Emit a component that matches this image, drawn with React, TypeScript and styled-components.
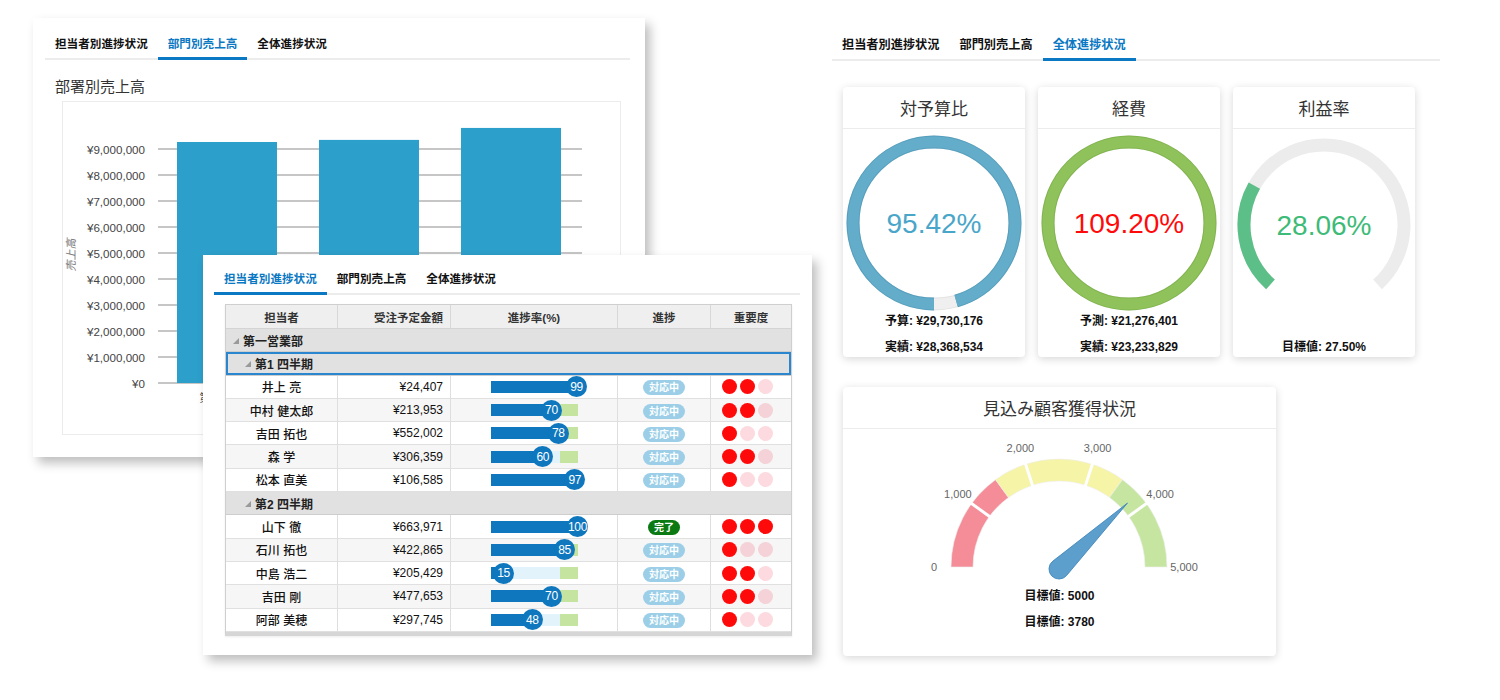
import React from 'react';
import styled, { createGlobalStyle } from 'styled-components';

const GlobalStyle = createGlobalStyle`
  * { box-sizing: border-box; }
  html, body { margin: 0; padding: 0; background: #fff; }
  body {
    font-family: "Liberation Sans", "Noto Sans CJK JP", sans-serif;
    color: #222;
  }
`;

const JP = `"Liberation Sans", "Noto Sans CJK JP", sans-serif`;
const BLUE = '#0a78c2';

const Page = styled.div`
  display: flex;
  width: 1500px;
  height: 700px;
  overflow: hidden;
`;

// left side: two overlapping windows
const Stage = styled.div`
  position: relative;
  flex: none;
  width: 832px;
  height: 700px;
  padding: 18px 0 0 33px;
`;

const Window = styled.div`
  background: #fff;
  box-shadow: 5px 6px 10px rgba(0, 0, 0, 0.26);
`;

const BackPanel = styled(Window)`
  width: 612px;
  height: 439px;
  padding: 10px 15px 0 12px;
`;

const FrontPanel = styled(Window)`
  position: absolute;
  left: 203px;
  top: 255px;
  width: 609px;
  height: 400px;
  padding: 8px 12px 0 11px;
`;

const TabBar = styled.div<{ $size: number }>`
  display: flex;
  border-bottom: 2px solid #ececec;
  font-size: ${(p) => p.$size}px;
`;

const Tab = styled.div<{ $active?: boolean }>`
  padding: 7px 10px 6px;
  line-height: 16px;
  font-weight: 700;
  font-family: "Noto Sans CJK JP", sans-serif;
  color: ${(p) => (p.$active ? BLUE : '#111')};
  border-bottom: 3px solid ${(p) => (p.$active ? BLUE : 'transparent')};
  margin-bottom: -2px;
`;

const tabNames = ['担当者別進捗状況', '部門別売上高', '全体進捗状況'];

const Tabs: React.FC<{ active: number; size?: number }> = ({ active, size = 12.2 }) => (
  <TabBar $size={size}>
    {tabNames.map((t, i) => (
      <Tab key={t} $active={i === active}>
        {t}
      </Tab>
    ))}
  </TabBar>
);

const PanelTitle = styled.div`
  margin: 16px 0 0 10px;
  font-size: 15px;
  line-height: 20px;
  font-family: "Noto Sans CJK JP", sans-serif;
  color: #333;
`;

const ChartBox = styled.div`
  margin: 5px 0 0 17px;
  width: 559px;
  height: 334px;
  border: 1px solid #ececec;
`;

const bars = [
  { x: 114, value: 9.27, label: '第一営業部' },
  { x: 256, value: 9.35, label: '第二営業部' },
  { x: 398, value: 9.81, label: '第三営業部' },
];
const yTicks = [9, 8, 7, 6, 5, 4, 3, 2, 1, 0];

const SalesChart = () => (
  <svg width={557} height={332}>
    {yTicks.map((v, i) => {
      const y = 47 + i * 26;
      return (
        <g key={v}>
          <line x1={95} x2={519} y1={y} y2={y} stroke="#c6c6c6" strokeWidth={2} />
          <text x={82} y={y} textAnchor="end" dominantBaseline="central" fontSize={11.6} fill="#444" fontFamily={JP}>
            {v === 0 ? '¥0' : `¥${v},000,000`}
          </text>
        </g>
      );
    })}
    {bars.map((b) => (
      <g key={b.label}>
        <rect x={b.x} y={281 - b.value * 26} width={100} height={b.value * 26} fill="#2c9fca" />
        <text x={b.x + 50} y={296} textAnchor="middle" dominantBaseline="central" fontSize={11} fill="#555" fontFamily={JP}>
          {b.label}
        </text>
      </g>
    ))}
    <text
      transform="translate(8 153) rotate(-90)"
      textAnchor="middle"
      dominantBaseline="central"
      fontSize={11}
      fontStyle="italic"
      fill="#777"
      fontFamily={JP}
    >
      売上高
    </text>
  </svg>
);

// table
const COLS = '112px 113px 167px 93px 80px';

const Table = styled.div`
  margin: 9px 0 0 11px;
  width: 567px;
  border: 1px solid #cfcfcf;
  border-bottom: 4px solid #d6d6d6;
  font-size: 12px;
  box-shadow: 0 1px 2px rgba(0, 0, 0, 0.08);
`;

const HeaderRow = styled.div`
  display: grid;
  grid-template-columns: ${COLS};
  height: 24px;
  background: #efefef;
  border-bottom: 1px solid #d4d4d4;
`;

const HeadCell = styled.div<{ $align?: string }>`
  display: flex;
  align-items: center;
  justify-content: ${(p) => p.$align || 'center'};
  padding: 0 7px;
  border-right: 1px solid #d8d8d8;
  font-weight: 700;
  font-size: 11.5px;
  color: #333;
  &:last-child { border-right: none; }
`;

const GroupRow = styled.div<{ $level: number; $selected?: boolean }>`
  display: flex;
  align-items: center;
  gap: 4px;
  height: 23.3px;
  padding-left: ${(p) => 7 + p.$level * 12}px;
  background: #e1e1e1;
  border-bottom: 1px solid #cdcdcd;
  font-weight: 700;
  color: #222;
  box-shadow: ${(p) => (p.$selected ? `inset 0 0 0 2px #2a86cf` : 'none')};
`;

const Caret = styled.span`
  width: 0;
  height: 0;
  border-left: 6px solid transparent;
  border-bottom: 6px solid #9a9a9a;
  margin-top: 2px;
`;

const DataRow = styled.div<{ $striped: boolean }>`
  display: grid;
  grid-template-columns: ${COLS};
  height: 23.3px;
  background: ${(p) => (p.$striped ? '#f6f6f6' : '#fff')};
  border-bottom: 1px solid #e0e0e0;
`;

const Cell = styled.div<{ $align?: string }>`
  display: flex;
  align-items: center;
  justify-content: ${(p) => p.$align || 'center'};
  padding: 0 7px;
  border-right: 1px solid #dedede;
  color: #111;
  &:last-child { border-right: none; }
`;

const Name = styled(Cell)`
  font-weight: 500;
`;

const Track = styled.div`
  position: relative;
  width: 87px;
  height: 12px;
  background: #e3f3fb;
`;

const GoalZone = styled.div`
  position: absolute;
  left: 80%;
  right: 0;
  top: 0;
  bottom: 0;
  background: #c4e4a0;
`;

const Fill = styled.div`
  position: absolute;
  left: 0;
  top: 0;
  bottom: 0;
  background: #0e77bd;
`;

const Knob = styled.div`
  position: absolute;
  top: 50%;
  width: 21px;
  height: 21px;
  margin: -10.5px 0 0 -10.5px;
  border-radius: 50%;
  background: #0e77bd;
  color: #fff;
  font-size: 12px;
  letter-spacing: -0.4px;
  display: flex;
  align-items: center;
  justify-content: center;
`;

const Pill = styled.span<{ $done?: boolean }>`
  display: inline-block;
  margin-top: 2px;
  padding: 0 6px;
  height: 15px;
  line-height: 15px;
  border-radius: 8px;
  background: ${(p) => (p.$done ? '#0b7a12' : '#9ccfe7')};
  color: #fff;
  font-size: 10px;
  font-weight: 700;
`;

const Dots = styled(Cell)`
  justify-content: flex-start;
  padding-left: 11px;
  gap: 3px;
`;

const Dot = styled.span<{ $on: boolean }>`
  width: 15px;
  height: 15px;
  border-radius: 50%;
  background: ${(p) => (p.$on ? '#ff0a0a' : 'rgba(240, 50, 80, 0.18)')};
`;

type Person = { name: string; amount: string; rate: number; level: number; done?: boolean };

const groups: { title: string; people: Person[] }[] = [
  {
    title: '第1 四半期',
    people: [
      { name: '井上 亮', amount: '¥24,407', rate: 99, level: 2 },
      { name: '中村 健太郎', amount: '¥213,953', rate: 70, level: 2 },
      { name: '吉田 拓也', amount: '¥552,002', rate: 78, level: 1 },
      { name: '森 学', amount: '¥306,359', rate: 60, level: 2 },
      { name: '松本 直美', amount: '¥106,585', rate: 97, level: 1 },
    ],
  },
  {
    title: '第2 四半期',
    people: [
      { name: '山下 徹', amount: '¥663,971', rate: 100, level: 3, done: true },
      { name: '石川 拓也', amount: '¥422,865', rate: 85, level: 1 },
      { name: '中島 浩二', amount: '¥205,429', rate: 15, level: 2 },
      { name: '吉田 剛', amount: '¥477,653', rate: 70, level: 2 },
      { name: '阿部 美穂', amount: '¥297,745', rate: 48, level: 1 },
    ],
  },
];

const ProgressTable = () => (
  <Table>
    <HeaderRow>
      <HeadCell>担当者</HeadCell>
      <HeadCell $align="flex-end">受注予定金額</HeadCell>
      <HeadCell>進捗率(%)</HeadCell>
      <HeadCell>進捗</HeadCell>
      <HeadCell>重要度</HeadCell>
    </HeaderRow>
    <GroupRow $level={0}>
      <Caret />
      第一営業部
    </GroupRow>
    {groups.map((g, gi) => (
      <React.Fragment key={g.title}>
        <GroupRow $level={1} $selected={gi === 0}>
          <Caret />
          {g.title}
        </GroupRow>
        {g.people.map((p, i) => (
          <DataRow key={p.name} $striped={i % 2 === 1}>
            <Name>{p.name}</Name>
            <Cell $align="flex-end">{p.amount}</Cell>
            <Cell>
              <Track>
                <GoalZone />
                <Fill style={{ width: `${p.rate}%` }} />
                <Knob style={{ left: `${p.rate}%` }}>{p.rate}</Knob>
              </Track>
            </Cell>
            <Cell>
              <Pill $done={p.done}>{p.done ? '完了' : '対応中'}</Pill>
            </Cell>
            <Dots>
              {[0, 1, 2].map((d) => (
                <Dot key={d} $on={d < p.level} />
              ))}
            </Dots>
          </DataRow>
        ))}
      </React.Fragment>
    ))}
  </Table>
);

// right side: dashboard
const Dashboard = styled.div`
  flex: none;
  width: 608px;
  padding-top: 29px;
`;

const CardArea = styled.div`
  display: flex;
  flex-direction: column;
  gap: 30px;
  padding: 26px 0 0 11px;
`;

const CardRow = styled.div`
  display: flex;
  gap: 13px;
`;

const Card = styled.div<{ $w: number; $h: number }>`
  display: flex;
  flex-direction: column;
  width: ${(p) => p.$w}px;
  height: ${(p) => p.$h}px;
  background: #fff;
  border-radius: 4px;
  box-shadow: 0 2px 9px rgba(0, 0, 0, 0.16);
`;

const CardTitle = styled.div`
  flex: none;
  height: 42px;
  display: flex;
  align-items: center;
  justify-content: center;
  border-bottom: 1px solid #ececec;
  font-size: 17px;
  font-family: "Noto Sans CJK JP", sans-serif;
  color: #333;
`;

const CardBody = styled.div<{ $pad?: number }>`
  flex: 1;
  display: flex;
  flex-direction: column;
  align-items: center;
  padding-bottom: ${(p) => p.$pad || 0}px;
`;

const Stats = styled.div`
  flex: 1;
  display: flex;
  flex-direction: column;
  justify-content: flex-end;
  align-items: center;
  gap: 6px;
`;

const Stat = styled.div`
  font-size: 12px;
  line-height: 20px;
  font-weight: 700;
  color: #111;
`;

const RING = { cx: 91, cy: 94, r: 81 };
const CIRC = 2 * Math.PI * RING.r;

const Ring: React.FC<{ ratio: number; color: string; edge: string; text: string; textColor: string }> = ({
  ratio,
  color,
  edge,
  text,
  textColor,
}) => {
  const len = Math.min(ratio, 1) * CIRC;
  const rot = `rotate(90 ${RING.cx} ${RING.cy})`;
  return (
    <svg width={182} height={182}>
      <circle cx={RING.cx} cy={RING.cy} r={RING.r} fill="none" stroke="#e2e2e2" strokeWidth={13} />
      <circle cx={RING.cx} cy={RING.cy} r={RING.r} fill="none" stroke="#efefef" strokeWidth={11} />
      <circle
        cx={RING.cx}
        cy={RING.cy}
        r={RING.r}
        fill="none"
        stroke={edge}
        strokeWidth={13}
        strokeDasharray={`${len} ${CIRC}`}
        transform={rot}
      />
      <circle
        cx={RING.cx}
        cy={RING.cy}
        r={RING.r}
        fill="none"
        stroke={color}
        strokeWidth={11}
        strokeDasharray={`${len} ${CIRC}`}
        transform={rot}
      />
      <text x={RING.cx} y={RING.cy} textAnchor="middle" dominantBaseline="central" fontSize={28} fill={textColor} fontFamily={JP}>
        {text}
      </text>
    </svg>
  );
};

const arcPt = (cx: number, cy: number, r: number, t: number) => {
  const a = (t * Math.PI) / 180;
  return [cx - r * Math.sin(a), cy + r * Math.cos(a)];
};

const arcPath = (cx: number, cy: number, r: number, t0: number, t1: number) => {
  const [x0, y0] = arcPt(cx, cy, r, t0);
  const [x1, y1] = arcPt(cx, cy, r, t1);
  return `M${x0} ${y0} A${r} ${r} 0 ${t1 - t0 > 180 ? 1 : 0} 1 ${x1} ${y1}`;
};

const ProfitArc: React.FC<{ ratio: number }> = ({ ratio }) => {
  const start = 42;
  const sweep = 276;
  return (
    <svg width={182} height={182}>
      <path d={arcPath(91, 96, 80, start, start + sweep)} fill="none" stroke="#ececec" strokeWidth={13} />
      <path d={arcPath(91, 96, 80, start, start + sweep * ratio)} fill="none" stroke="#5dbf88" strokeWidth={13} />
      <text x={91} y={96} textAnchor="middle" dominantBaseline="central" fontSize={28} fill="#3dbb77" fontFamily={JP}>
        28.06%
      </text>
    </svg>
  );
};

const G = { cx: 216, cy: 138, ro: 108, ri: 86, max: 5000 };

const gPt = (v: number, r: number) => {
  const a = (Math.PI * v) / G.max;
  return [G.cx - r * Math.cos(a), G.cy - r * Math.sin(a)];
};

const band = (a: number, b: number) => {
  const [x1, y1] = gPt(a, G.ro);
  const [x2, y2] = gPt(b, G.ro);
  const [x3, y3] = gPt(b, G.ri);
  const [x4, y4] = gPt(a, G.ri);
  return `M${x1} ${y1} A${G.ro} ${G.ro} 0 0 1 ${x2} ${y2} L${x3} ${y3} A${G.ri} ${G.ri} 0 0 0 ${x4} ${y4} Z`;
};

const bands = [
  { from: 0, to: 1500, color: '#f48d97' },
  { from: 1500, to: 3500, color: '#f6f4a6' },
  { from: 3500, to: 5000, color: '#c6e5a0' },
];

const LeadGauge: React.FC<{ value: number }> = ({ value }) => (
  <svg width={433} height={155}>
    {bands.map((b) => (
      <path key={b.from} d={band(b.from, b.to)} fill={b.color} stroke="#eee" strokeWidth={0.6} />
    ))}
    {[1000, 2000, 3000, 4000].map((v) => {
      const [x1, y1] = gPt(v, G.ri - 1);
      const [x2, y2] = gPt(v, G.ro + 1);
      return <line key={v} x1={x1} y1={y1} x2={x2} y2={y2} stroke="#fff" strokeWidth={3} />;
    })}
    {[0, 1000, 2000, 3000, 4000, 5000].map((v) => {
      const [x, y] = gPt(v, 125);
      return (
        <text key={v} x={x} y={y} textAnchor="middle" dominantBaseline="central" fontSize={11} fill="#666" fontFamily={JP}>
          {v.toLocaleString('en-US')}
        </text>
      );
    })}
    <g transform={`translate(${G.cx} ${G.cy + 2}) rotate(${(value / G.max) * 180 - 180})`}>
      <path d="M1.05 -9.94 L95 0 L1.05 9.94 A10 10 0 1 1 1.05 -9.94 Z" fill="#5c9fcd" stroke="#3f86ba" strokeWidth={0.8} />
    </g>
  </svg>
);

export default function App() {
  return (
    <>
      <GlobalStyle />
      <Page>
        <Stage>
          <BackPanel>
            <Tabs active={1} size={11.6} />
            <PanelTitle>部署別売上高</PanelTitle>
            <ChartBox>
              <SalesChart />
            </ChartBox>
          </BackPanel>
          <FrontPanel>
            <Tabs active={0} size={11.6} />
            <ProgressTable />
          </FrontPanel>
        </Stage>
        <Dashboard>
          <Tabs active={2} />
          <CardArea>
            <CardRow>
              <Card $w={182} $h={270}>
                <CardTitle>対予算比</CardTitle>
                <CardBody>
                  <Ring ratio={0.9542} color="#64adca" edge="#559fbe" text="95.42%" textColor="#4aa6c9" />
                  <Stats>
                    <Stat>予算: ¥29,730,176</Stat>
                    <Stat>実績: ¥28,368,534</Stat>
                  </Stats>
                </CardBody>
              </Card>
              <Card $w={182} $h={270}>
                <CardTitle>経費</CardTitle>
                <CardBody>
                  <Ring ratio={1.092} color="#90c25c" edge="#80b54c" text="109.20%" textColor="#ff0a0a" />
                  <Stats>
                    <Stat>予測: ¥21,276,401</Stat>
                    <Stat>実績: ¥23,233,829</Stat>
                  </Stats>
                </CardBody>
              </Card>
              <Card $w={182} $h={270}>
                <CardTitle>利益率</CardTitle>
                <CardBody>
                  <ProfitArc ratio={0.2806} />
                  <Stats>
                    <Stat>目標値: 27.50%</Stat>
                  </Stats>
                </CardBody>
              </Card>
            </CardRow>
            <Card $w={433} $h={269}>
              <CardTitle>見込み顧客獲得状況</CardTitle>
              <CardBody $pad={24}>
                <LeadGauge value={3780} />
                <Stats>
                  <Stat>目標値: 5000</Stat>
                  <Stat>目標値: 3780</Stat>
                </Stats>
              </CardBody>
            </Card>
          </CardArea>
        </Dashboard>
      </Page>
    </>
  );
}
